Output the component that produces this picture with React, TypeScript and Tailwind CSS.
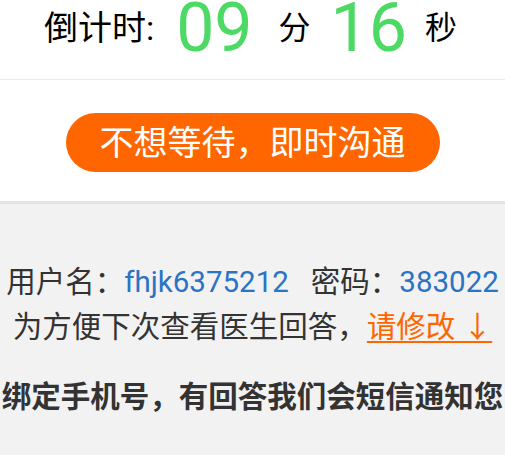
export default function App() {
  const font = { fontFamily: "Roboto, 'Noto Sans CJK SC', sans-serif" };
  return (
    <div className="w-[505px] h-[455px] overflow-hidden bg-[#f2f2f2]" style={font}>
      <div className="h-[80px] bg-white border-b border-[#ebebeb] flex items-center justify-center pb-[24px] pr-[4px] text-black">
        <span className="text-[34px] leading-none">倒计时:</span>
        <span className="text-[68px] leading-[56px] text-[#4cd964] ml-[22px]">09</span>
        <span className="text-[32px] leading-none ml-[26px]">分</span>
        <span className="text-[68px] leading-[56px] text-[#4cd964] ml-[20px]">16</span>
        <span className="text-[32px] leading-none ml-[18px]">秒</span>
      </div>
      <div className="h-[124px] bg-white flex justify-center pt-[33px] border-b-[3px] border-[#e3e3e8]">
        <button className="w-[374px] h-[59px] rounded-full bg-[#ff6600] text-white text-[34px] leading-none">
          不想等待，即时沟通
        </button>
      </div>
      <div className="flex flex-col items-center text-[#333] text-[29.5px] leading-none whitespace-nowrap">
        <p className="mt-[64px]">
          用户名：<span className="text-[#2a73c5]">fhjk6375212</span>
          <span className="ml-[22px]">密码：</span>
          <span className="text-[#2a73c5]">383022</span>
        </p>
        <p className="mt-[15px]">
          为方便下次查看医生回答，
          <span className="text-[#ff6600] underline underline-offset-[4px]">请修改 ↓</span>
        </p>
        <p className="mt-[41px] font-bold">绑定手机号，有回答我们会短信通知您</p>
      </div>
    </div>
  );
}
